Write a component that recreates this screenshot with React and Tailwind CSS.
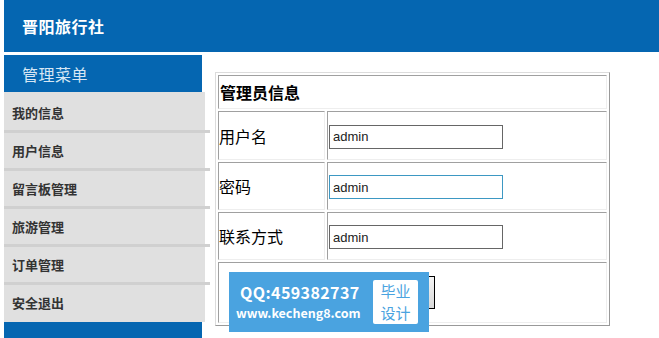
export default function App() {
  const menu = ["我的信息", "用户信息", "留言板管理", "旅游管理", "订单管理", "安全退出"];
  const rows = [
    { label: "用户名", focus: false, h: "h-[49px]" },
    { label: "密码", focus: true, h: "h-[48px]" },
    { label: "联系方式", focus: false, h: "h-[48px]" },
  ];
  const cjk = { fontFamily: '"Noto Sans CJK SC", "Noto Sans", sans-serif' };

  return (
    <div className="relative w-[659px] h-[338px] overflow-hidden bg-white pl-[4px]" style={cjk}>
      {/* Header */}
      <div className="h-[52px] bg-[#0566b1] flex items-center pl-[18px]">
        <span className="text-white text-[16px] font-bold tracking-[0.5px]">晋阳旅行社</span>
      </div>

      <div className="flex mt-[3px]">
        {/* Sidebar */}
        <div className="w-[201px] flex flex-col">
          <div className="w-[198px] h-[37px] bg-[#0566b1] flex items-center pl-[18px]">
            <span className="text-[#d6e6f4] text-[16px] tracking-[0.5px]">管理菜单</span>
          </div>
          <div className="bg-[#e0e0e0] pt-[3px] h-[230px]">
            {menu.map((m, i) => (
              <div
                key={m}
                className={
                  "w-[198px] h-[35px] flex items-center pl-[8px] text-[13px] font-bold text-[#333] " +
                  (i < menu.length - 1 ? "border-b-[3px] border-[#d0d0d0] box-content" : "")
                }
              >
                {m}
              </div>
            ))}
          </div>
          <div className="w-[198px] h-[16px] bg-[#0566b1]" />
        </div>

        {/* Main */}
        <div className="pl-[10px] pt-[17px]">
          <table
            className="w-[395px] border border-t-[#dcdcdc] border-l-[#dcdcdc] border-r-[#999] border-b-[#999] border-separate border-spacing-[2px]"
          >
            <tbody>
              <tr>
                <td
                  colSpan={2}
                  className="h-[34px] border border-t-[#a0a0a0] border-l-[#a0a0a0] border-r-[#eee] border-b-[#eee] pl-[1px] text-[16px] font-bold text-black"
                >
                  管理员信息
                </td>
              </tr>
              {rows.map((r) => (
                <tr key={r.label}>
                  <td
                    className={
                      "w-[107px] border border-t-[#a0a0a0] border-l-[#a0a0a0] border-r-[#eee] border-b-[#eee] text-[16px] text-black " +
                      r.h
                    }
                  >
                    {r.label}
                  </td>
                  <td className="border border-t-[#a0a0a0] border-l-[#a0a0a0] border-r-[#eee] border-b-[#eee] pl-[1px]">
                    <input
                      readOnly
                      value="admin"
                      className={
                        "w-[174px] h-[24px] px-[3px] text-[13px] text-[#222] outline-none border " +
                        (r.focus ? "border-[#3d98c3]" : "border-[#666]")
                      }
                      style={{ fontFamily: '"Liberation Sans", Arial, sans-serif' }}
                    />
                  </td>
                </tr>
              ))}
              <tr>
                <td
                  colSpan={2}
                  className="h-[61px] border border-t-[#a0a0a0] border-l-[#a0a0a0] border-r-[#eee] border-b-[#eee]"
                >
                  <div className="flex pl-[161px]">
                    {/* submit button, mostly covered by the watermark */}
                    <button
                      aria-label="修改"
                      className="w-[55px] h-[33px] border border-black bg-gradient-to-b from-[#f4f4f4] to-[#d8d8d8]"
                    />
                  </div>
                </td>
              </tr>
            </tbody>
          </table>
        </div>
      </div>

      {/* Watermark overlay */}
      <div className="absolute left-[229px] top-[272px] w-[200px] h-[60px] bg-[#4aa3e0] flex items-center">
        <div className="flex flex-col pl-[7px] text-white">
          <span className="text-[16px] leading-[20px] pl-[4px] font-semibold tracking-[0.4px]">QQ:459382737</span>
          <span className="text-[12.5px] leading-[18px] mt-[2px] font-bold">www.kecheng8.com</span>
        </div>
        <div className="ml-auto mr-[11px] w-[45px] h-[44px] bg-white rounded-[2px] flex flex-col items-center text-[#4aa3e0] text-[15px]">
          <span className="block h-[22px] leading-[22px]">毕业</span>
          <span className="block h-[22px] leading-[22px]">设计</span>
        </div>
      </div>
    </div>
  );
}
